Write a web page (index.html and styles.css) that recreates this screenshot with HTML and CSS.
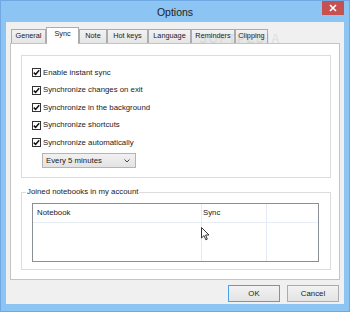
FILE: index.html
```html
<!DOCTYPE html>
<html>
<head>
<meta charset="utf-8">
<title>Options</title>
<link rel="stylesheet" href="styles.css">
</head>
<body>
<div class="window">
  <div class="titlebar">
    <span class="title">Options</span>
    <div class="close">
      <svg width="8" height="8" viewBox="0 0 8 8"><path d="M1 1 L7 7 M7 1 L1 7" stroke="#fff" stroke-width="1.6" fill="none"/></svg>
    </div>
  </div>
  <div class="client">
    <div class="tabs">
      <div class="tab">General</div>
      <div class="tab active">Sync</div>
      <div class="tab">Note</div>
      <div class="tab">Hot keys</div>
      <div class="tab">Language</div>
      <div class="tab">Reminders</div>
      <div class="tab">Clipping</div>
    </div>
    <div class="panel">
      <div class="group">
        <div class="checks">
          <label class="check"><span class="box"><svg width="7" height="7" viewBox="0 0 7 7"><path d="M0.8 3.6 L2.6 5.4 L6.2 1.2" stroke="#111" stroke-width="1.5" fill="none"/></svg></span>Enable instant sync</label>
          <label class="check"><span class="box"><svg width="7" height="7" viewBox="0 0 7 7"><path d="M0.8 3.6 L2.6 5.4 L6.2 1.2" stroke="#111" stroke-width="1.5" fill="none"/></svg></span>Synchronize changes on exit</label>
          <label class="check"><span class="box"><svg width="7" height="7" viewBox="0 0 7 7"><path d="M0.8 3.6 L2.6 5.4 L6.2 1.2" stroke="#111" stroke-width="1.5" fill="none"/></svg></span>Synchronize in the background</label>
          <label class="check"><span class="box"><svg width="7" height="7" viewBox="0 0 7 7"><path d="M0.8 3.6 L2.6 5.4 L6.2 1.2" stroke="#111" stroke-width="1.5" fill="none"/></svg></span>Synchronize shortcuts</label>
          <label class="check"><span class="box"><svg width="7" height="7" viewBox="0 0 7 7"><path d="M0.8 3.6 L2.6 5.4 L6.2 1.2" stroke="#111" stroke-width="1.5" fill="none"/></svg></span>Synchronize automatically</label>
        </div>
        <div class="select">
          <span>Every 5 minutes</span>
          <svg width="6" height="4" viewBox="0 0 6 4"><path d="M0.5 0.5 L3 3 L5.5 0.5" stroke="#444" stroke-width="1" fill="none"/></svg>
        </div>
      </div>
      <fieldset class="group2">
        <legend>Joined notebooks in my account</legend>
        <div class="list">
          <div class="cell head c1">Notebook</div>
          <div class="cell head c2">Sync</div>
          <div class="cell head c3"></div>
          <div class="cell c1"></div>
          <div class="cell c2"></div>
          <div class="cell c3"></div>
        </div>
      </fieldset>
    </div>
    <div class="buttons">
      <button class="btn default">OK</button>
      <button class="btn">Cancel</button>
    </div>
  </div>
  <div class="watermark">SOFTPEDIA</div>
  <svg class="cursor" width="9" height="14" viewBox="0 0 9 14"><path d="M0.5 0.5 L0.5 11 L3 8.6 L4.8 12.8 L6.3 12.1 L4.6 8 L8 8 Z" fill="#fff" stroke="#222" stroke-width="0.9" stroke-linejoin="round"/></svg>
</div>
</body>
</html>
```

FILE: styles.css
```css
html, body {
  margin: 0;
  padding: 0;
}
body {
  width: 350px;
  height: 312px;
  overflow: hidden;
  font-family: "Liberation Sans", Arial, sans-serif;
  font-size: 7.8px;
  color: #1a1a1a;
}
.window {
  position: relative;
  box-sizing: border-box;
  width: 350px;
  height: 312px;
  background: #8cc4f4;
  border: 1px solid #6fa8e2;
  padding: 0 5px 7px;
  display: flex;
  flex-direction: column;
}
.titlebar {
  height: 21px;
  display: grid;
  grid-template-columns: 1fr auto 1fr;
  align-items: center;
}
.title {
  grid-column: 2;
  font-size: 10.5px;
  color: #222;
}
.close {
  grid-column: 3;
  justify-self: end;
  align-self: start;
  width: 22px;
  height: 14px;
  background: #c75050;
  display: flex;
  align-items: center;
  justify-content: center;
}
.close svg { display: block; }
.client {
  flex: 1;
  background: #f0f0f0;
  padding: 5px 4px 2px;
  display: flex;
  flex-direction: column;
}
.tabs {
  display: grid;
  grid-template-columns: 35px 33px 28px 41px 43px 44px 33px;
  align-items: end;
  height: 16px;
  margin-left: 1px;
}
.tab {
  box-sizing: border-box;
  height: 14px;
  border: 1px solid #acacac;
  border-bottom: none;
  background: linear-gradient(#f2f2f2, #e5e5e5);
  text-align: center;
  line-height: 11px;
  font-size: 7.3px;
  white-space: nowrap;
  overflow: hidden;
}
.tab.active {
  position: relative;
  z-index: 1;
  height: 17px;
  margin-bottom: -1px;
  background: #fff;
  line-height: 12px;
}
.panel {
  box-sizing: border-box;
  height: 237px;
  border: 1px solid #c4c4c4;
  background: #fff;
  padding: 11px 8px 9px 10px;
  display: flex;
  flex-direction: column;
  gap: 9px;
}
.group {
  box-sizing: border-box;
  height: 123px;
  border: 1px solid #dcdcdc;
  padding: 11.5px 10px 0;
  display: flex;
  flex-direction: column;
}
.checks {
  display: flex;
  flex-direction: column;
  gap: 7.5px;
}
.check {
  display: flex;
  align-items: center;
  gap: 2px;
  height: 10px;
  line-height: 10px;
  white-space: nowrap;
}
.box {
  box-sizing: border-box;
  width: 9px;
  height: 9px;
  border: 1px solid #333;
  background: #fff;
  display: flex;
  align-items: center;
  justify-content: center;
}
.box svg { display: block; }
.select {
  box-sizing: border-box;
  margin: 5.5px 0 0 10px;
  width: 94px;
  height: 15px;
  border: 1px solid #b4b4b4;
  background: linear-gradient(#f1f1f1, #e3e3e3);
  display: flex;
  align-items: center;
  justify-content: space-between;
  padding: 0 5px 0 3px;
}
.select svg { display: block; }
.group2 {
  margin: 0;
  min-width: 0;
  padding: 6px 11px 7px 4px;
  border: 1px solid #dcdcdc;
}
.group2 legend {
  padding: 0 1px;
  line-height: 10px;
}
.list {
  box-sizing: border-box;
  margin-left: 6px;
  height: 59px;
  border: 1px solid #8a8e95;
  display: grid;
  grid-template-columns: 169px 65px 1fr;
  grid-template-rows: 19px 1fr;
}
.cell {
  box-sizing: border-box;
  border-right: 1px solid #e4ebf5;
}
.cell.c3 { border-right: none; }
.cell.head {
  border-bottom: 1px solid #e8edf4;
  line-height: 18px;
  padding-left: 4px;
}
.cell.head.c2 { padding-left: 1px; }
.buttons {
  display: flex;
  justify-content: flex-end;
  gap: 7px;
  margin-top: 5px;
  padding-right: 1px;
}
.btn {
  box-sizing: border-box;
  width: 52px;
  height: 17px;
  padding: 0;
  border: 1px solid #acacac;
  background: linear-gradient(#f2f2f2, #e4e4e4);
  font: inherit;
  color: #1a1a1a;
}
.btn.default {
  border-color: #4aa0ea;
}
.watermark {
  position: absolute;
  left: 198px;
  top: 31px;
  font-size: 12px;
  font-weight: bold;
  letter-spacing: 1.5px;
  color: rgba(120, 120, 120, 0.12);
  pointer-events: none;
}
.cursor {
  position: absolute;
  left: 200px;
  top: 226px;
}
```
